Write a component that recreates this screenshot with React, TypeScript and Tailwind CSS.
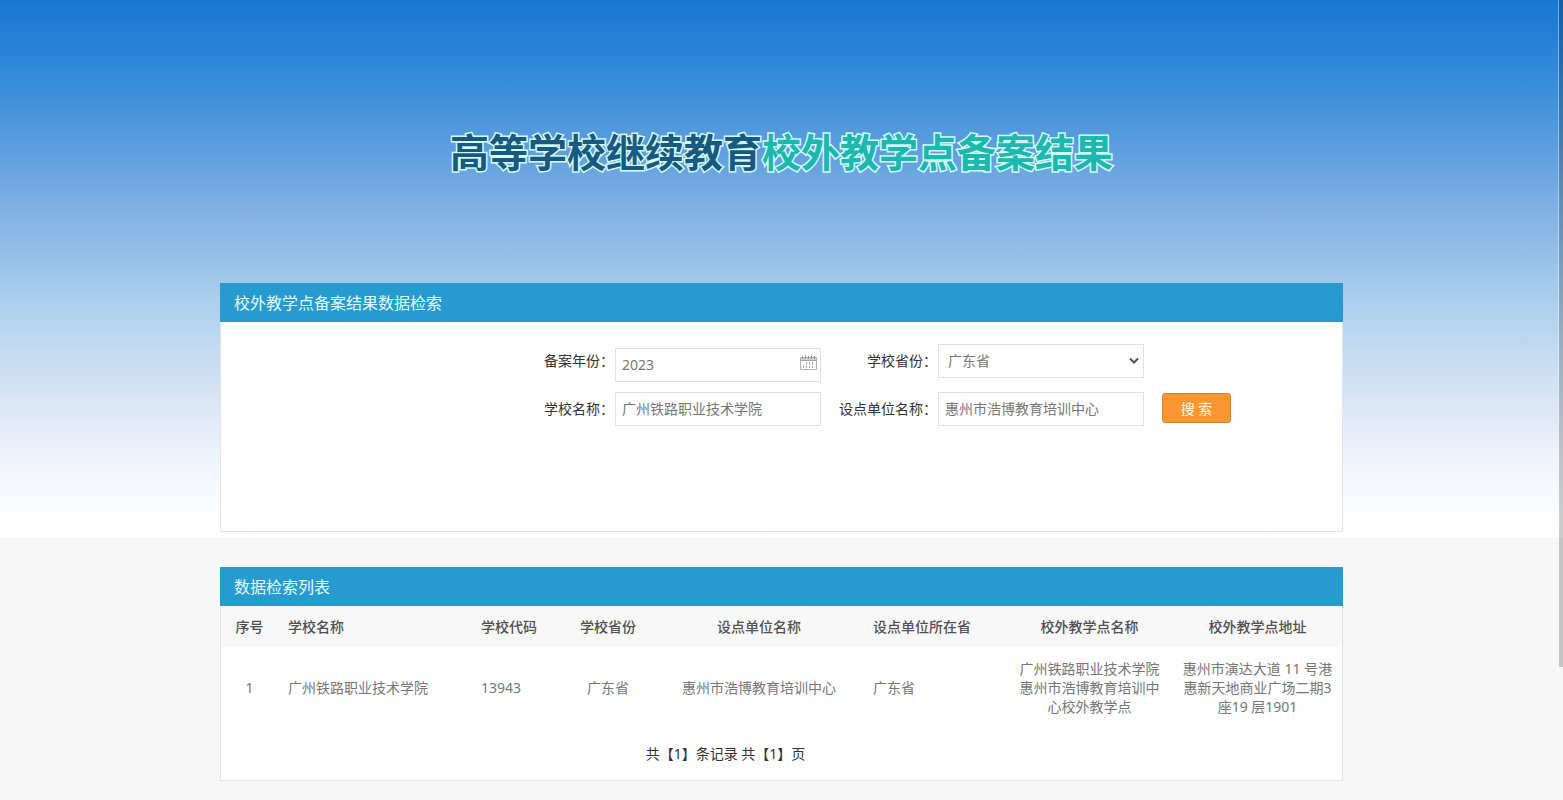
import { useState } from "react";
import type { ReactNode } from "react";

const FIELD =
  "h-[34px] w-[206px] border border-[#dfe0e8] bg-[#fefefe] text-sm text-[#777] outline-none focus:border-[#2a9bd0]";

function Panel({ title, children }: { title: string; children: ReactNode }) {
  return (
    <section className="w-full">
      <h2 className="flex h-[39px] items-center bg-[#279bcf] px-[14px] text-base font-normal text-[#e6fbff]">
        {title}
      </h2>
      <div className="border border-t-0 border-[#e4e4e6] bg-[#fefefe]">{children}</div>
    </section>
  );
}

function Field({ id, label, children }: { id: string; label: string; children: ReactNode }) {
  return (
    <div className="flex items-start justify-end gap-px">
      <label htmlFor={id} className="text-sm leading-[34px] whitespace-nowrap text-[#333]">
        {label}
      </label>
      {children}
    </div>
  );
}

function CalendarIcon() {
  return (
    <svg width="17" height="16" viewBox="0 0 17 16" fill="none" stroke="#b0b0b0" aria-hidden="true">
      <path d="M.5 2.5h16v12H.5z" />
      <path d="M.5 5.5h16M1 4h15" stroke="#a3a3a3" />
      <path d="M2.5 1v3M5.5 0v4M8.5 1v3M11.5 0v4M14.5 1v3" stroke="#999" />
      <path d="M6.5 7v6M9.5 7v6M12.5 7v6M3.5 10v3" strokeDasharray="3 1" />
    </svg>
  );
}

const COLUMNS = [
  { title: "序号", width: 57, cell: "px-2 text-center" },
  { title: "学校名称", width: 193, cell: "px-[10px] text-left" },
  { title: "学校代码", width: 90, cell: "px-[10px] text-left" },
  { title: "学校省份", width: 94, cell: "px-2 text-center" },
  { title: "设点单位名称", width: 208, cell: "px-2 text-center" },
  { title: "设点单位所在省", width: 143, cell: "px-[10px] text-left" },
  { title: "校外教学点名称", width: 167, cell: "px-2 text-center" },
  { title: "校外教学点地址", width: 169, cell: "px-2 text-center" },
];

const ROWS = [
  [
    "1",
    "广州铁路职业技术学院",
    "13943",
    "广东省",
    "惠州市浩博教育培训中心",
    "广东省",
    "广州铁路职业技术学院惠州市浩博教育培训中心校外教学点",
    "惠州市演达大道 11 号港惠新天地商业广场二期3座19 层1901",
  ],
];

export default function App() {
  const [year, setYear] = useState("2023");
  const [school, setSchool] = useState("广州铁路职业技术学院");
  const [unit, setUnit] = useState("惠州市浩博教育培训中心");

  return (
    <div
      lang="zh-CN"
      className="min-h-screen bg-[#f7f7f7] bg-[linear-gradient(to_bottom,#1876d3_0px,#2a83d8_50px,#4292da_102px,#609fdf_153px,#7eafe3_204px,#95c0e8_255px,#aed0ed_306px,#c6dcf1_357px,#dce8f6_408px,#eff3fb_459px,#fcfdfe_510px,#ffffff_538px)] bg-[length:100%_538px] bg-no-repeat pb-[18px] font-['Noto_Sans','Noto_Sans_CJK_SC',sans-serif]"
    >
      <div className="fixed top-0 right-0 h-[667px] w-[5px] border-l border-white/40 bg-black/20 bg-clip-padding" />

      <header className="flex h-[283px] items-center justify-center pt-5">
        <h1 className="text-center text-[39px] leading-[60px] font-bold [-webkit-text-stroke:3px_#d4fbfa] [paint-order:stroke_fill]">
          <span className="text-[#17597f]">高等学校继续教育</span>
          <span className="text-[#1cb8ae]">校外教学点备案结果</span>
        </h1>
      </header>

      <main className="mx-auto flex w-full max-w-[1123px] flex-col gap-[35px]">
        <Panel title="校外教学点备案结果数据检索">
          <form
            className="flex min-h-[209px] items-start justify-end pt-[22px] pr-[111px]"
            onSubmit={(e) => e.preventDefault()}
          >
            <div className="grid grid-cols-[auto_auto_auto] gap-x-[18px] gap-y-[10px]">
              <Field id="year" label="备案年份：">
                <div className="relative pt-1">
                  <input
                    id="year"
                    className={`${FIELD} block pr-8 pb-[2px] pl-[6px]`}
                    value={year}
                    onChange={(e) => setYear(e.target.value)}
                  />
                  <span className="pointer-events-none absolute top-[11px] right-1">
                    <CalendarIcon />
                  </span>
                </div>
              </Field>
              <Field id="province" label="学校省份：">
                <div className="relative">
                  <select
                    id="province"
                    defaultValue="广东省"
                    className={`${FIELD} block appearance-none pr-8 pl-[9px]`}
                  >
                    <option>广东省</option>
                  </select>
                  <svg
                    className="pointer-events-none absolute top-[13px] right-1"
                    width="12"
                    height="8"
                    viewBox="0 0 12 8"
                    fill="none"
                    stroke="#555"
                    strokeWidth="2"
                    aria-hidden="true"
                  >
                    <path d="M2 1.5l4 4 4-4" />
                  </svg>
                </div>
              </Field>
              <span />
              <Field id="school" label="学校名称：">
                <input
                  id="school"
                  className={`${FIELD} px-[6px] pb-[2px]`}
                  value={school}
                  onChange={(e) => setSchool(e.target.value)}
                />
              </Field>
              <Field id="unit" label="设点单位名称：">
                <input
                  id="unit"
                  className={`${FIELD} px-[6px] pb-[2px]`}
                  value={unit}
                  onChange={(e) => setUnit(e.target.value)}
                />
              </Field>
              <button
                type="submit"
                className="mt-[1px] h-[30px] w-[69px] rounded-[3px] border border-[#d98533] bg-[#fb9631] pt-[2px] text-sm leading-none text-[#fffbea]"
              >
                搜 索
              </button>
            </div>
          </form>
        </Panel>

        <Panel title="数据检索列表">
          <table className="w-full table-fixed border-collapse text-sm">
            <colgroup>
              {COLUMNS.map((c) => (
                <col key={c.title} style={{ width: c.width }} />
              ))}
            </colgroup>
            <thead>
              <tr className="h-[41px] bg-[#f8f8f8]">
                {COLUMNS.map((c) => (
                  <th key={c.title} className={`${c.cell} font-medium whitespace-nowrap text-[#505050]`}>
                    {c.title}
                  </th>
                ))}
              </tr>
            </thead>
            <tbody>
              {ROWS.map((row) => (
                <tr key={row[0]} className="h-[80px]">
                  {row.map((text, i) => (
                    <td key={COLUMNS[i].title} className={`${COLUMNS[i].cell} leading-[19px] text-[#777]`}>
                      {text}
                    </td>
                  ))}
                </tr>
              ))}
            </tbody>
          </table>
          <p className="flex h-[53px] items-center justify-center pr-[112px] text-sm text-[#333]">
            共【1】条记录 共【1】页
          </p>
        </Panel>
      </main>
    </div>
  );
}
